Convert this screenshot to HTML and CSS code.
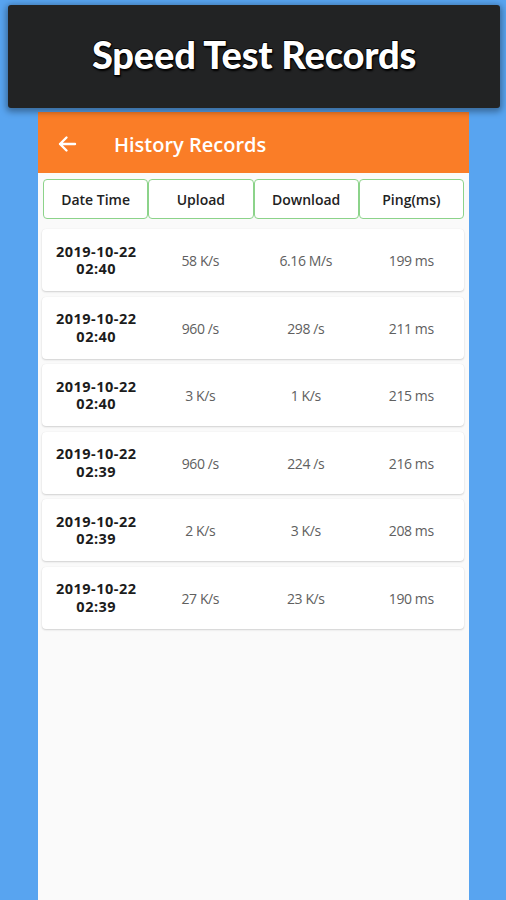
FILE: index.html
```html
<!DOCTYPE html>
<html>
<head>
<meta charset="utf-8">
<link rel="stylesheet" href="styles.css">
</head>
<body>
<div class="banner"><h1 class="banner-title">Speed Test Records</h1></div>
<div class="screen">
  <div class="appbar">
    <svg class="back" width="20" height="20" viewBox="0 0 20 20"><path d="M18 10H3M9.5 3.5L3 10l6.5 6.5" fill="none" stroke="#fff" stroke-width="2.4" stroke-linecap="round" stroke-linejoin="round"/></svg>
    <span class="appbar-title">History Records</span>
  </div>
  <div class="thead">
    <div class="th">Date Time</div>
    <div class="th">Upload</div>
    <div class="th">Download</div>
    <div class="th">Ping(ms)</div>
  </div>
  <div class="rows">
    <div class="card"><div class="date"><span>2019-10-22</span><span>02:40</span></div><div class="val">58 K/s</div><div class="val">6.16 M/s</div><div class="val">199 ms</div></div>
    <div class="card"><div class="date"><span>2019-10-22</span><span>02:40</span></div><div class="val">960 /s</div><div class="val">298 /s</div><div class="val">211 ms</div></div>
    <div class="card"><div class="date"><span>2019-10-22</span><span>02:40</span></div><div class="val">3 K/s</div><div class="val">1 K/s</div><div class="val">215 ms</div></div>
    <div class="card"><div class="date"><span>2019-10-22</span><span>02:39</span></div><div class="val">960 /s</div><div class="val">224 /s</div><div class="val">216 ms</div></div>
    <div class="card"><div class="date"><span>2019-10-22</span><span>02:39</span></div><div class="val">2 K/s</div><div class="val">3 K/s</div><div class="val">208 ms</div></div>
    <div class="card"><div class="date"><span>2019-10-22</span><span>02:39</span></div><div class="val">27 K/s</div><div class="val">23 K/s</div><div class="val">190 ms</div></div>
  </div>
</div>
</body>
</html>
```
FILE: styles.css
```css
html, body {
  margin: 0;
  padding: 0;
}
body {
  width: 506px;
  height: 900px;
  overflow: hidden;
  background: #58a4f0;
  font-family: "Open Sans", "Noto Sans", sans-serif;
}
.banner {
  margin: 5px 6px 0 8px;
  height: 103px;
  background: #222324;
  border-radius: 3px;
  box-shadow: 0 2px 6px 2px rgba(0,0,0,0.35);
  display: flex;
  align-items: center;
  justify-content: center;
  position: relative;
  z-index: 2;
}
.banner-title {
  margin: 0 0 5px 0;
  font-family: Lato, "Open Sans", sans-serif;
  font-weight: 900;
  font-size: 38px;
  letter-spacing: -0.2px;
  color: #fff;
  -webkit-text-stroke: 1.5px #000;
  paint-order: stroke fill;
  text-shadow: 1px 2px 2px #000;
}
.screen {
  margin: 4px 37px 0 38px;
  height: 800px;
  background: #fafafa;
}
.appbar {
  height: 61px;
  background: #fa7d27;
  display: flex;
  align-items: center;
  padding-left: 19px;
}
.back {
  display: block;
  margin-top: 2px;
}
.appbar-title {
  margin-left: 37px;
  color: #fff;
  font-weight: 600;
  font-size: 20px;
  margin-top: 3px;
}
.thead {
  margin: 6px 5px 0 5px;
  display: grid;
  grid-template-columns: repeat(4, 1fr);
  height: 40px;
}
.th {
  border: 1px solid #8cd38a;
  border-radius: 4px;
  background: #fff;
  display: flex;
  align-items: center;
  justify-content: center;
  font-size: 14px;
  font-weight: 600;
  color: #222;
}
.rows {
  margin: 10px 5px 0 4px;
  display: flex;
  flex-direction: column;
  gap: 5.5px;
}
.card {
  height: 62px;
  background: #fff;
  border-radius: 4px;
  box-shadow: 0 1px 2px rgba(0,0,0,0.16), 0 0 1px rgba(0,0,0,0.08);
  display: grid;
  grid-template-columns: repeat(4, 1fr);
  align-items: center;
  text-align: center;
}
.date {
  display: flex;
  flex-direction: column;
  align-items: center;
  font-size: 14.5px;
  font-weight: 700;
  line-height: 17.5px;
  color: #1c1c1c;
  letter-spacing: 0.5px;
  padding-left: 3px;
}
.date span {
  display: block;
}
.val {
  font-size: 14px;
  color: #606060;
  letter-spacing: -0.4px;
  padding-top: 1px;
}
```
